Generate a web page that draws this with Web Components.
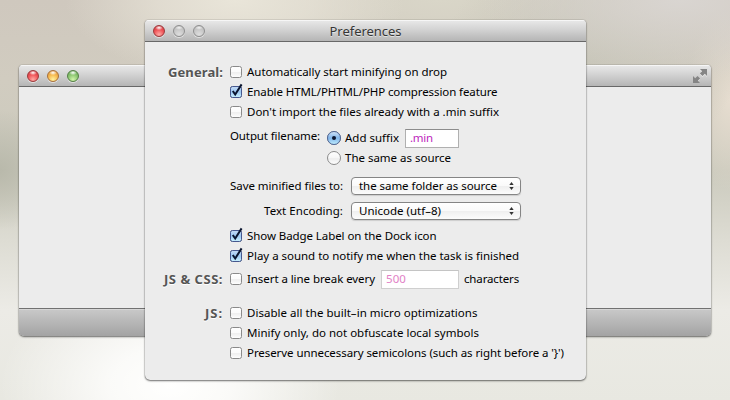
<!DOCTYPE html>
<html lang="en"><head><meta charset="utf-8"><title>Preferences</title>
<style>
html,body{margin:0;width:730px;height:400px;overflow:hidden}
body{font-family:"Noto Sans","Open Sans",sans-serif;font-size:11.5px;color:#000}
</style></head><body>
<mac-desktop></mac-desktop>
<script>
const define=(name,html,init)=>customElements.define(name,class extends HTMLElement{
  connectedCallback(){
    if(this.shadowRoot)return;
    this.attachShadow({mode:'open'}).innerHTML=html;
    if(init)init(this,this.shadowRoot);
  }
});

// A line of text tracked out to the width given in its attribute
define('text-run',`<style>:host{display:inline-block;white-space:nowrap;line-height:20px;flex:none;font-kerning:normal}span{display:inline-block}</style><span><slot></slot></span>`,(el,root)=>{
  const s=root.querySelector('span'),w=+el.getAttribute('w'),n=[...el.textContent].length;
  const natural=s.getBoundingClientRect().width;
  if(w){s.style.letterSpacing=((w-natural)/n)+'px';el.style.width=w+'px';}
});

define('traffic-light',`<style>
:host{display:block;width:12px;height:12px;box-sizing:border-box;border-radius:50%;border:1px solid #8f8f8f;background:radial-gradient(ellipse 4px 2px at 50% 17%,#fffc,#fff0),radial-gradient(circle at 50% 85%,#dedede,#c9c9c9 50%,#b4b4b4);box-shadow:0 1px 0 #fff8}
:host([c=red]){border-color:#9b393b;background:radial-gradient(ellipse 4px 2.5px at 50% 17%,#fff,#fff0),radial-gradient(circle at 50% 85%,#ffaaa5,#f0565a 50%,#c92e36)}
:host([c=amber]){border-color:#a8703a;background:radial-gradient(ellipse 4px 2.5px at 50% 17%,#fff,#fff0),radial-gradient(circle at 50% 85%,#fff3a0,#f6b94e 50%,#d98a32)}
:host([c=green]){border-color:#547f45;background:radial-gradient(ellipse 4px 2.5px at 50% 17%,#fff,#fff0),radial-gradient(circle at 50% 85%,#d2f5ab,#8dc772 50%,#5b9b49)}
</style>`);

define('full-screen-icon',`<style>:host{display:block;width:14px;height:14px}svg{display:block}</style>
<svg width="14" height="14" viewBox="0 0 14 14"><g fill="#fff" opacity=".55" transform="translate(0 1)"><path d="M7 0h7v7l-2.200-2.200-2.300 2.300-2.600-2.600L9.200 2.200zM0 7l2.200 2.200 2.300-2.300 2.600 2.600-2.300 2.300L7 14H0z"/></g><path fill="#858585" d="M7 0h7v7l-2.200-2.200-2.300 2.300-2.600-2.600L9.200 2.200zM0 7l2.200 2.200 2.300-2.300 2.600 2.600-2.300 2.300L7 14H0z"/></svg>`);

define('mac-window',`<style>
:host{display:flex;flex-direction:column;box-sizing:border-box;background:#ececec;border-radius:4px 4px 5px 5px;overflow:hidden;box-shadow:0 0 1px #0009,0 1px 2px #0008}
header{height:22px;box-sizing:border-box;flex:none;border-bottom:1px solid #686868;background:linear-gradient(#e9e9e9,#d3d3d3 45%,#b5b5b5);box-shadow:inset 0 1px #f6f6f6;display:grid;grid-template-columns:1fr auto 1fr;align-items:center;padding:0 4px 0 8px}
.lights{display:flex;gap:8px}
.title{font-size:13px;color:#363636;text-shadow:0 1px #fff8;display:flex;margin:0 2px 0 -2px}
.tool{justify-self:end}
main{flex:1}
</style><header><div class="lights"><slot name="lights"></slot></div><div class="title"><slot name="title"></slot></div><div class="tool"><slot name="tool"></slot></div></header><main><slot></slot></main><slot name="footer"></slot>`);

define('status-bar',`<style>:host{display:block;height:28px;box-sizing:border-box;border-top:1px solid #717171;background:linear-gradient(#c9c9c9,#a3a3a3);box-shadow:inset 0 1px #d6d6d6}</style>`);

define('check-box',`<style>
:host{display:flex;align-items:center;height:20px;gap:5px}
svg{display:block;flex:none;overflow:visible}.tick,.on{display:none}
:host([checked]) .tick,:host([checked]) .on{display:block}
</style><svg width="12" height="12" viewBox="0 0 12 12"><defs><linearGradient id="a" x2="0" y2="1"><stop stop-color="#fff"/><stop offset=".5" stop-color="#fbfbfb"/><stop offset=".55" stop-color="#efefef"/><stop offset="1" stop-color="#fff"/></linearGradient><linearGradient id="b" x2="0" y2="1"><stop stop-color="#c6dcf6"/><stop offset=".5" stop-color="#9cc8f2"/><stop offset="1" stop-color="#cbf3ff"/></linearGradient></defs>
<rect x=".5" y=".5" width="11" height="11" rx="2" fill="url(#a)" stroke="#8a8a8a"/><rect class="on" x=".5" y=".5" width="11" height="11" rx="2" fill="url(#b)" stroke="#46588e"/><path class="tick" d="M2.800 5 5.200 8.500 11.600-1.600" fill="none" stroke="#0b1630" stroke-width="2"/></svg><slot></slot>`);

define('radio-button',`<style>
:host{display:flex;align-items:center;height:20px;gap:4px}
svg{display:block;flex:none}.on{display:none}:host([checked]) .on{display:block}
</style><svg width="14" height="14" viewBox="0 0 14 14"><defs><linearGradient id="a" x2="0" y2="1"><stop stop-color="#fff"/><stop offset=".5" stop-color="#f6f6f6"/><stop offset=".55" stop-color="#ededed"/><stop offset="1" stop-color="#fff"/></linearGradient><linearGradient id="b" x2="0" y2="1"><stop stop-color="#d3e5f8"/><stop offset=".5" stop-color="#82b5ea"/><stop offset="1" stop-color="#c0efff"/></linearGradient></defs><circle cx="7" cy="7" r="6.500" fill="url(#a)" stroke="#8a8a8a"/><g class="on"><circle cx="7" cy="7" r="6.500" fill="url(#b)" stroke="#4f6596"/><circle cx="7" cy="7" r="2" fill="#0b1630"/></g></svg><slot></slot>`);

define('text-field',`<style>:host{display:flex;align-items:center;box-sizing:border-box;height:19px;background:#fff;border:1px solid #b0b0b0;border-top-color:#8c8c8c;padding-left:4px;color:#bd1fbd;flex:none}
:host([dim]){border-color:#cfcfcf;border-top-color:#c4c4c4;color:#e27fc6}</style><slot></slot>`);

define('pop-up',`<style>
:host{display:flex;align-items:center;justify-content:space-between;box-sizing:border-box;width:170px;height:18px;border:1px solid #858585;border-radius:4px;background:linear-gradient(#fff,#fafafa 48%,#efefef 52%,#fcfcfc);padding:0 6px 0 7px;box-shadow:0 1px 1px #0002}
svg{display:block}</style><slot></slot><svg width="5" height="8" viewBox="0 0 5 8"><path d="M2.500 0 4.700 3H.3zM.3 5h4.400L2.500 8z" fill="#333"/></svg>`);

define('pref-section',`<style>
:host{display:grid;grid-template-columns:78px 1fr;column-gap:7px;align-items:start}
.label{display:flex;justify-content:flex-end;font-size:13px;font-weight:700;color:#555;text-shadow:0 1px #fff}
.rows{display:flex;flex-direction:column}</style><div class="label"><slot name="label"></slot></div><div class="rows"><slot></slot></div>`);

define('h-row',`<style>:host{display:flex;align-items:center;height:20px}</style><slot></slot>`);

define('prefs-pane',`<style>
:host{display:block;padding-top:20px}
.output{display:flex;gap:7px;margin-top:6px}.output>text-run{margin-top:-2px}
.menus{display:grid;grid-template-columns:113px 170px;column-gap:8px;row-gap:5px;align-items:center;justify-items:end;margin:8px 0 5px;}
.menus{width:291px}
.suffix{margin-left:6px;width:54px}.count{margin:0 5px 0 6px;width:78px}
.css{margin-top:3px}.js{margin-top:14px}
</style>
<pref-section>
 <text-run slot="label" w="55">General:</text-run>
 <check-box><text-run w="200">Automatically start minifying on drop</text-run></check-box>
 <check-box checked><text-run w="250.500">Enable HTML/PHTML/PHP compression feature</text-run></check-box>
 <check-box><text-run w="252">Don't import the files already with a .min suffix</text-run></check-box>
 <div class="output"><text-run w="90">Output filename:</text-run><div>
  <h-row><radio-button checked><text-run w="54">Add suffix</text-run></radio-button><text-field class="suffix"><text-run w="23">.min</text-run></text-field></h-row>
  <radio-button><text-run w="106">The same as source</text-run></radio-button></div></div>
 <div class="menus"><text-run w="113">Save minified files to:</text-run><pop-up><text-run w="138">the same folder as source</text-run></pop-up>
 <text-run w="79">Text Encoding:</text-run><pop-up><text-run w="82">Unicode (utf–8)</text-run></pop-up></div>
 <check-box checked><text-run w="189.500">Show Badge Label on the Dock icon</text-run></check-box>
 <check-box checked><text-run w="272">Play a sound to notify me when the task is finished</text-run></check-box>
</pref-section>
<pref-section class="css">
 <text-run slot="label" w="59">JS &amp; CSS:</text-run>
 <h-row><check-box><text-run w="128">Insert a line break every</text-run></check-box><text-field dim class="count"><text-run w="20">500</text-run></text-field><text-run w="55">characters</text-run></h-row>
</pref-section>
<pref-section class="js">
 <text-run slot="label" w="18">JS:</text-run>
 <check-box><text-run w="230.500">Disable all the built–in micro optimizations</text-run></check-box>
 <check-box><text-run w="232">Minify only, do not obfuscate local symbols</text-run></check-box>
 <check-box><text-run w="317">Preserve unnecessary semicolons (such as right before a '}')</text-run></check-box>
</pref-section>`);

define('mac-desktop',`<style>
:host{display:block;position:relative;width:730px;height:400px;overflow:hidden;background:
radial-gradient(ellipse 170px 110px at 170px 385px,#fffffe,#fffffecc 35%,#fffffe00),
radial-gradient(ellipse 170px 80px at 235px 0,#e9e5d9,#e9e5d9aa 45%,#e9e5d900),
radial-gradient(ellipse 200px 80px at 680px 0,#d9d5d1,#d9d5d100),
radial-gradient(ellipse 150px 110px at 590px 60px,#c7c5b8,#c7c5b8aa 40%,#c7c5b800),
radial-gradient(ellipse 45px 90px at 730px 100px,#e6ddd0,#e6ddd000),
radial-gradient(ellipse 60px 60px at 0 170px,#b9b9ab,#b9b9ab00),
radial-gradient(ellipse 250px 70px at 440px 0,#d9d6c8,#d9d6c800),
linear-gradient(#cfc8be 0,#d1ccc0 80px,#cbcabd 170px,#dddcd3 240px,#ecebe6 310px,#e8e8e1)}
.back,.front{position:absolute}
.back{left:19px;top:65px;width:692px;height:271px}
.front{left:145px;top:20px;width:441px;height:360px}
</style>
<mac-window class="back"><traffic-light slot="lights" c="red"></traffic-light><traffic-light slot="lights" c="amber"></traffic-light><traffic-light slot="lights" c="green"></traffic-light><full-screen-icon slot="tool"></full-screen-icon><status-bar slot="footer"></status-bar></mac-window>
<mac-window class="front"><traffic-light slot="lights" c="red"></traffic-light><traffic-light slot="lights"></traffic-light><traffic-light slot="lights"></traffic-light><text-run slot="title" w="72">Preferences</text-run><prefs-pane></prefs-pane></mac-window>`);
</script></body></html>
